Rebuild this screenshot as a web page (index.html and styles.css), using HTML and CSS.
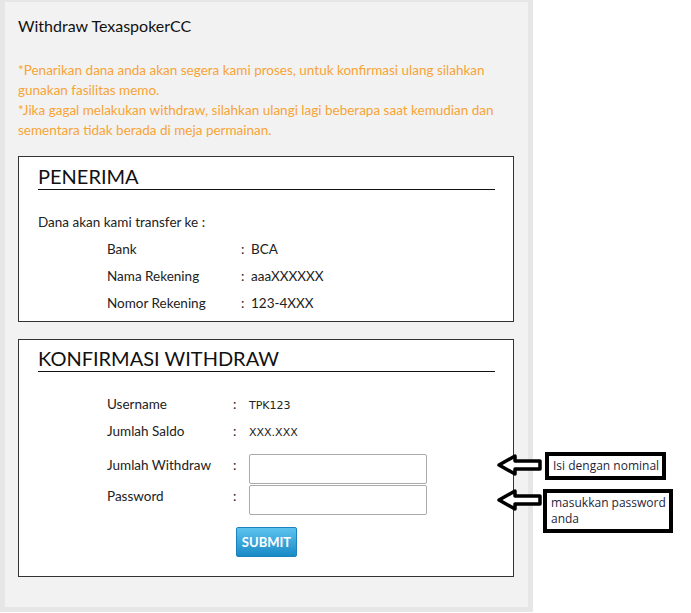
FILE: index.html
```html
<!DOCTYPE html>
<html lang="en">
<head>
    <meta charset="UTF-8">
    <title>Withdraw TexaspokerCC</title>
    <link rel="stylesheet" href="styles.css">
</head>
<body>
    <div class="panel">
        <h1 class="title">Withdraw TexaspokerCC</h1>
        <p class="note">*Penarikan dana anda akan segera kami proses, untuk konfirmasi ulang silahkan gunakan fasilitas memo.<br>*Jika gagal melakukan withdraw, silahkan ulangi lagi beberapa saat kemudian dan sementara tidak berada di meja permainan.</p>

        <div class="box">
            <h2>PENERIMA</h2>
            <p class="intro">Dana akan kami transfer ke :</p>
            <div class="info">
                <span>Bank</span><span>:</span><span>BCA</span>
                <span>Nama Rekening</span><span>:</span><span>aaaXXXXXX</span>
                <span>Nomor Rekening</span><span>:</span><span>123-4XXX</span>
            </div>
        </div>

        <div class="box box-form">
            <h2>KONFIRMASI WITHDRAW</h2>
            <form class="confirm">
                <span class="lbl">Username</span><span class="sep">:</span><span class="val">TPK123</span>
                <span class="lbl">Jumlah Saldo</span><span class="sep">:</span><span class="val">XXX.XXX</span>
                <label class="field-lbl first" for="amount">Jumlah Withdraw</label><span class="field-lbl first">:</span><input class="first" type="text" id="amount">
                <label class="field-lbl" for="pass">Password</label><span class="field-lbl">:</span><input type="password" id="pass">
                <div class="actions"><button type="submit">SUBMIT</button></div>
            </form>
        </div>
    </div>

    <!-- annotations -->
    <svg class="arrow arrow-1" width="46" height="22" viewBox="0 0 46 22"><polygon points="2,11 18,2 18,7 43,7 43,15 18,15 18,20" fill="#fff" stroke="#000" stroke-width="3.5" stroke-linejoin="round"/></svg>
    <div class="tip tip-1">Isi dengan nominal</div>
    <svg class="arrow arrow-2" width="46" height="22" viewBox="0 0 46 22"><polygon points="2,11 18,2 18,7 43,7 43,15 18,15 18,20" fill="#fff" stroke="#000" stroke-width="3.5" stroke-linejoin="round"/></svg>
    <div class="tip tip-2">masukkan password anda</div>
</body>
</html>
```

FILE: styles.css
```css
body {
    margin: 0;
    font-family: Lato, "Open Sans", sans-serif;
    color: #222;
    background: #fff;
}

.panel {
    box-sizing: border-box;
    width: 533px;
    background: #f2f2f2;
    border: 5px solid #e6e6e6;
    border-top-width: 2px;
    padding: 14px 14px 30px 13px;
}

.title {
    margin: 0;
    font-size: 16px;
    font-weight: normal;
    line-height: 20px;
    color: #111;
}

.note {
    margin: 24px 0 16px;
    font-size: 13.5px;
    line-height: 20px;
    color: #f7a436;
}

.box {
    background: #fff;
    border: 1px solid #333;
    padding: 6px 18px 4px 19px;
    font-size: 13.5px;
    line-height: 27px;
}

.box h2 {
    margin: 0;
    font-size: 20px;
    font-weight: normal;
    line-height: 26px;
    color: #111;
    border-bottom: 1px solid #111;
}

.intro {
    margin: 19px 0 0;
}

.info {
    display: grid;
    grid-template-columns: 134px 10px auto;
    padding-left: 69px;
}

.box-form {
    margin-top: 17px;
    padding-top: 5px;
    padding-bottom: 19px;
}

.confirm {
    display: grid;
    grid-template-columns: 126px 16px 178px;
    padding: 19px 0 0 69px;
}

.val {
    font-family: "DejaVu Sans", Verdana, sans-serif;
    font-size: 11px;
    padding-top: 3px;
    line-height: 24px;
}

.field-lbl {
    line-height: 20px;
    padding-top: 1px;
}

.first {
    margin-top: 9px;
}

input {
    box-sizing: border-box;
    height: 30px;
    width: 178px;
    margin-bottom: 1px;
    border: 1px solid #aaa;
    border-radius: 2px;
    background: #fff;
}

.actions {
    grid-column: 1 / -1;
    padding: 11px 0 0 129px;
    line-height: normal;
}

button {
    width: 61px;
    height: 30px;
    padding: 0;
    border: 1px solid #1b82bd;
    border-radius: 2px;
    background: linear-gradient(#5cc3ee, #1a8ac6);
    color: #fff;
    font-family: Lato, sans-serif;
    font-size: 13px;
    font-weight: bold;
    cursor: pointer;
}

.arrow {
    position: absolute;
    left: 497px;
}

.arrow-1 {
    top: 454px;
}

.arrow-2 {
    top: 489px;
}

.tip {
    position: absolute;
    box-sizing: border-box;
    background: #fff;
    border: 4px solid #000;
    font-family: "Open Sans", sans-serif;
    font-size: 12px;
    line-height: 16px;
    color: #1f1f3a;
}

.tip-1 {
    left: 545px;
    top: 452px;
    width: 121px;
    height: 28px;
    padding: 2px 0 0 4px;
}

.tip-2 {
    left: 543px;
    top: 489px;
    width: 130px;
    height: 44px;
    padding: 2px 0 0 4px;
}
```
